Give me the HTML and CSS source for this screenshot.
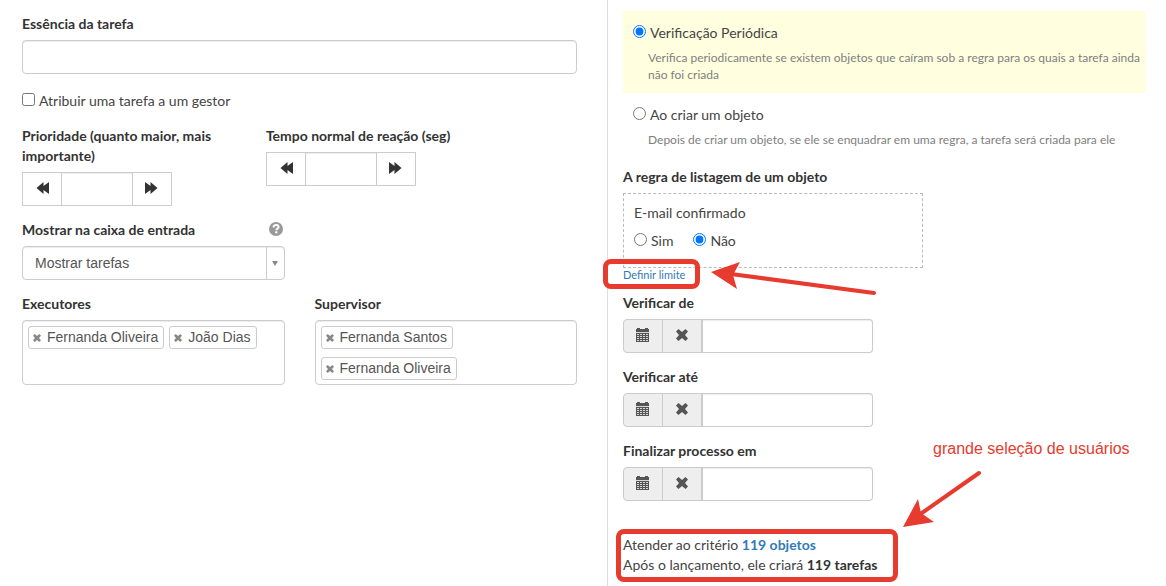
FILE: index.html
```html
<!DOCTYPE html>
<html lang="pt">
<head>
<meta charset="utf-8">
<meta name="viewport" content="width=device-width, initial-scale=1">
<title>Tarefa</title>
<link rel="stylesheet" href="styles.css">
</head>
<body>
<svg class="sprite" aria-hidden="true">
  <symbol id="back" viewBox="0 0 14 14"><path d="M0.5 7 7.5 1V5L13 1V13L7.5 9V13Z"/></symbol>
  <symbol id="forward" viewBox="0 0 14 14"><path d="M13.500 7 6.500 1V5L1 1V13L6.500 9V13Z"/></symbol>
  <symbol id="calendar" viewBox="0 0 14 14"><path fill-rule="evenodd" d="M0 1H1V0H4V1H9V0H12V1H13V4H0ZM0 5H13V14H0ZM1 6V7H3V6ZM4 6V7H6V6ZM7 6V7H9V6ZM10 6V7H12V6ZM1 8V9H3V8ZM4 8V9H6V8ZM7 8V9H9V8ZM10 8V9H12V8ZM1 10V11H3V10ZM4 10V11H6V10ZM7 10V11H9V10ZM10 10V11H12V10ZM1 12V13H3V12ZM4 12V13H6V12ZM7 12V13H9V12ZM10 12V13H12V12Z"/><path d="M0 4H13V14H0Z" opacity=".15"/></symbol>
  <symbol id="cross" viewBox="0 0 12 12"><path d="M2.500 0 6 3 9.500 0 12 2.500 9 6 12 9.500 9.500 12 6 9 2.500 12 0 9.500 3 6 0 2.500Z"/></symbol>
</svg>
<main class="page">
  <section class="main">
    <div class="field">
      <label class="label" for="essence">Essência da tarefa</label>
      <input class="control" id="essence" type="text">
    </div>
    <label class="check"><input type="checkbox"><span>Atribuir uma tarefa a um gestor</span></label>
    <div class="row row-steppers">
      <div class="field">
        <label class="label" for="priority">Prioridade (quanto maior, mais importante)</label>
        <div class="stepper">
          <button type="button" aria-label="Diminuir"><svg><use href="#back"/></svg></button>
          <input id="priority" type="text">
          <button type="button" aria-label="Aumentar"><svg><use href="#forward"/></svg></button>
        </div>
      </div>
      <div class="field">
        <label class="label" for="reaction">Tempo normal de reação (seg)</label>
        <div class="stepper">
          <button type="button" aria-label="Diminuir"><svg><use href="#back"/></svg></button>
          <input id="reaction" type="text">
          <button type="button" aria-label="Aumentar"><svg><use href="#forward"/></svg></button>
        </div>
      </div>
    </div>
    <div class="row">
      <div class="field">
        <div class="label-line">
          <label class="label" for="inbox">Mostrar na caixa de entrada</label>
          <svg class="help" viewBox="0 0 14 14" role="img" aria-label="Ajuda"><circle cx="7" cy="7" r="7" fill="#999"/><path d="M4.600 5.400C4.600 3.700 5.600 3 7.100 3 8.700 3 9.600 3.900 9.600 5.100 9.600 6.700 7.300 6.500 7.300 8.300" fill="none" stroke="#fff" stroke-width="2"/><path d="M6.200 9.300H8.400V11.300H6.200Z" fill="#fff"/></svg>
        </div>
        <div class="select">
          <select class="control" id="inbox"><option>Mostrar tarefas</option></select>
          <span class="select-arrow"><svg viewBox="0 0 6 5"><path d="M0 0H6L3 5Z"/></svg></span>
        </div>
      </div>
    </div>
    <div class="row">
      <div class="field">
        <h2 class="label">Executores</h2>
        <div class="tags">
          <span class="tag"><button type="button" aria-label="Remover"><svg><use href="#cross"/></svg></button>Fernanda Oliveira</span>
          <span class="tag"><button type="button" aria-label="Remover"><svg><use href="#cross"/></svg></button>João Dias</span>
        </div>
      </div>
      <div class="field">
        <h2 class="label">Supervisor</h2>
        <div class="tags">
          <span class="tag"><button type="button" aria-label="Remover"><svg><use href="#cross"/></svg></button>Fernanda Santos</span>
          <span class="tag"><button type="button" aria-label="Remover"><svg><use href="#cross"/></svg></button>Fernanda Oliveira</span>
        </div>
      </div>
    </div>
  </section>

  <section class="side">
    <div class="mode mode-active">
      <label class="check"><input type="radio" name="mode" checked><span>Verificação Periódica</span></label>
      <p>Verifica periodicamente se existem objetos que caíram sob a regra para os quais a tarefa ainda não foi criada</p>
    </div>
    <div class="mode">
      <label class="check"><input type="radio" name="mode"><span>Ao criar um objeto</span></label>
      <p>Depois de criar um objeto, se ele se enquadrar em uma regra, a tarefa será criada para ele</p>
    </div>
    <h2 class="label rule-title">A regra de listagem de um objeto</h2>
    <fieldset class="rule">
      <div class="rule-name">E-mail confirmado</div>
      <div class="options">
        <label class="check"><input type="radio" name="mail"><span>Sim</span></label>
        <label class="check"><input type="radio" name="mail" checked><span>Não</span></label>
      </div>
    </fieldset>
    <div class="limit"><a class="marked marked-link" href="#">Definir limite</a></div>
    <div class="field">
      <label class="label" for="from">Verificar de</label>
      <div class="date">
        <button type="button" aria-label="Calendário"><svg class="cal"><use href="#calendar"/></svg></button>
        <button type="button" aria-label="Limpar"><svg><use href="#cross"/></svg></button>
        <input id="from" type="text">
      </div>
    </div>
    <div class="field">
      <label class="label" for="until">Verificar até</label>
      <div class="date">
        <button type="button" aria-label="Calendário"><svg class="cal"><use href="#calendar"/></svg></button>
        <button type="button" aria-label="Limpar"><svg><use href="#cross"/></svg></button>
        <input id="until" type="text">
      </div>
    </div>
    <div class="field">
      <label class="label" for="finish">Finalizar processo em</label>
      <div class="date">
        <button type="button" aria-label="Calendário"><svg class="cal"><use href="#calendar"/></svg></button>
        <button type="button" aria-label="Limpar"><svg><use href="#cross"/></svg></button>
        <input id="finish" type="text">
      </div>
    </div>
    <div class="summary marked">
      <div>Atender ao critério <a href="#">119 objetos</a></div>
      <div>Após o lançamento, ele criará <strong>119 tarefas</strong></div>
    </div>
    <svg class="arrow arrow-limit" viewBox="0 0 166 36" aria-hidden="true"><path class="shaft" d="M20 12 163 31"/><path d="M0 10 29 0 22 13 26 27Z"/></svg>
    <svg class="arrow arrow-summary" viewBox="0 0 80 60" aria-hidden="true"><path class="shaft" d="M16 45 76 3"/><path d="M0 57 15 29 18 43 31 52Z"/></svg>
    <p class="note">grande seleção de usuários</p>
  </section>
</main>
</body>
</html>
```
FILE: styles.css
```css
* { box-sizing: border-box; }
body {
  margin: 0;
  background: #fff;
  color: #444;
  font: 14px/20px Lato, "Liberation Sans", sans-serif;
}
h2, p, fieldset { margin: 0; }
button, input, select { font: inherit; color: inherit; margin: 0; }
button { padding: 0; cursor: pointer; }
svg { display: block; fill: currentColor; }
a { color: #337ab7; text-decoration: none; }
.sprite { position: absolute; width: 0; height: 0; }

.page {
  display: grid;
  grid-template-columns: minmax(0, 607fr) minmax(0, 559fr);
  min-height: 100vh;
}
.main {
  display: flex;
  flex-direction: column;
  gap: 14px;
  padding: 14px 30px 14px 22px;
}
.side {
  position: relative;
  padding: 11px 20px 11px 15px;
  border-left: 1px solid #ddd;
}
.label {
  display: block;
  margin-bottom: 6px;
  color: #333;
  font-size: 14px;
  font-weight: 700;
  line-height: 20px;
}
.control {
  display: block;
  width: 100%;
  height: 34px;
  padding: 0 12px;
  border: 1px solid #ccc;
  border-radius: 4px;
  background: #fff;
  box-shadow: inset 0 1px 1px rgba(0, 0, 0, .075);
}
.check { display: flex; gap: 4px; }
.check input { flex: none; width: 13px; height: 13px; margin-top: 2px; }
.main > .check { padding: 3px 0 1px; }
.row {
  display: grid;
  grid-template-columns: repeat(2, minmax(0, 1fr));
  gap: 30px;
}
.row-steppers { grid-template-columns: minmax(0, 11fr) minmax(0, 16fr); }

.stepper {
  display: flex;
  width: 150px;
  height: 34px;
  border: 1px solid #ccc;
  color: #333;
}
.stepper button {
  display: grid;
  place-items: center;
  width: 38px;
  padding: 0 0 2px 2px;
  border: 0;
  background: #fff;
}
.stepper input + button { padding: 0 2px 2px 0; }
.stepper svg { width: 14px; height: 14px; }
.stepper input {
  flex: 1;
  min-width: 0;
  border: solid #ccc;
  border-width: 0 1px;
  box-shadow: inset 0 1px 1px rgba(0, 0, 0, .075);
}
.label-line { display: flex; justify-content: space-between; padding-right: 2px; }
.help { width: 14px; height: 14px; margin-top: 2px; }
.select { position: relative; }
.select select {
  appearance: none;
  color: #555;
  font-family: "Liberation Sans", sans-serif;
}
.select-arrow {
  position: absolute;
  inset: 1px 1px 1px auto;
  display: grid;
  place-items: center;
  width: 18px;
  border-left: 1px solid #ccc;
  color: #888;
  pointer-events: none;
}
.select-arrow svg { width: 6px; height: 5px; }
.tags {
  display: flex;
  flex-wrap: wrap;
  align-content: flex-start;
  gap: 8px 5px;
  min-height: 65px;
  padding: 5px 5px 4px;
  border: 1px solid #ccc;
  border-radius: 4px;
  box-shadow: inset 0 1px 1px rgba(0, 0, 0, .075);
}
.tag {
  display: flex;
  height: 23px;
  padding: 0 5px 0 4px;
  border: 1px solid #ccc;
  border-radius: 3px;
  color: #555;
  font-family: "Liberation Sans", sans-serif;
}
.tag button { margin-right: 6px; border: 0; background: none; color: #888; }
.tag svg { width: 8px; height: 8px; }

.mode { padding: 12px 0 10px 10px; }
.mode-active { background: #ffffdf; }
.mode p {
  margin: 6px 0 0 15px;
  color: #808080;
  font-size: 12px;
  line-height: 17px;
}
.rule-title { padding-top: 9px; }
.rule {
  width: 300px;
  max-width: 100%;
  height: 75px;
  padding: 9px 10px;
  border: 1px dashed #bbb;
}
.rule-name { margin-bottom: 8px; }
.options { display: flex; gap: 20px; }
.limit { margin-bottom: 12px; font-size: 11px; line-height: 13px; }
.side .field { margin-bottom: 14px; }
.date { display: flex; width: 250px; height: 34px; }
.date button {
  display: grid;
  place-items: center;
  width: 40px;
  margin-right: -1px;
  padding-bottom: 2px;
  border: 1px solid #ccc;
  background: #eee;
  color: #555;
}
.date button:first-child { border-radius: 4px 0 0 4px; }
.date button + button { width: 41px; margin-right: 0; border-right-width: 2px; }
.date svg { width: 12px; height: 12px; }
.date .cal { width: 14px; height: 14px; }
.date input {
  flex: 1;
  min-width: 0;
  border: 1px solid #ccc;
  border-left: 0;
  border-radius: 0 4px 4px 0;
  box-shadow: inset 0 1px 1px rgba(0, 0, 0, .075);
}
.summary { width: fit-content; margin-top: 34px; }
.summary a { font-weight: 700; }
.summary strong { color: #333; }

.marked { position: relative; }
.marked::after {
  content: "";
  position: absolute;
  inset: -6px -21px -7px -7px;
  border: 5px solid #e63b2e;
  border-radius: 8px;
  pointer-events: none;
}
.marked-link::after { inset: -9px -15px -8px -20px; }
.arrow { position: absolute; fill: #e63b2e; }
.arrow .shaft { fill: none; stroke: #e63b2e; stroke-width: 4; stroke-linecap: round; }
.arrow-limit { left: 103px; top: 262px; width: 166px; height: 36px; }
.arrow-summary { left: 295px; top: 470px; width: 80px; height: 60px; }
.note {
  position: absolute;
  left: 325px;
  top: 439px;
  color: #e63b2e;
  font: 16px/20px "Liberation Sans", sans-serif;
  white-space: nowrap;
}
```
